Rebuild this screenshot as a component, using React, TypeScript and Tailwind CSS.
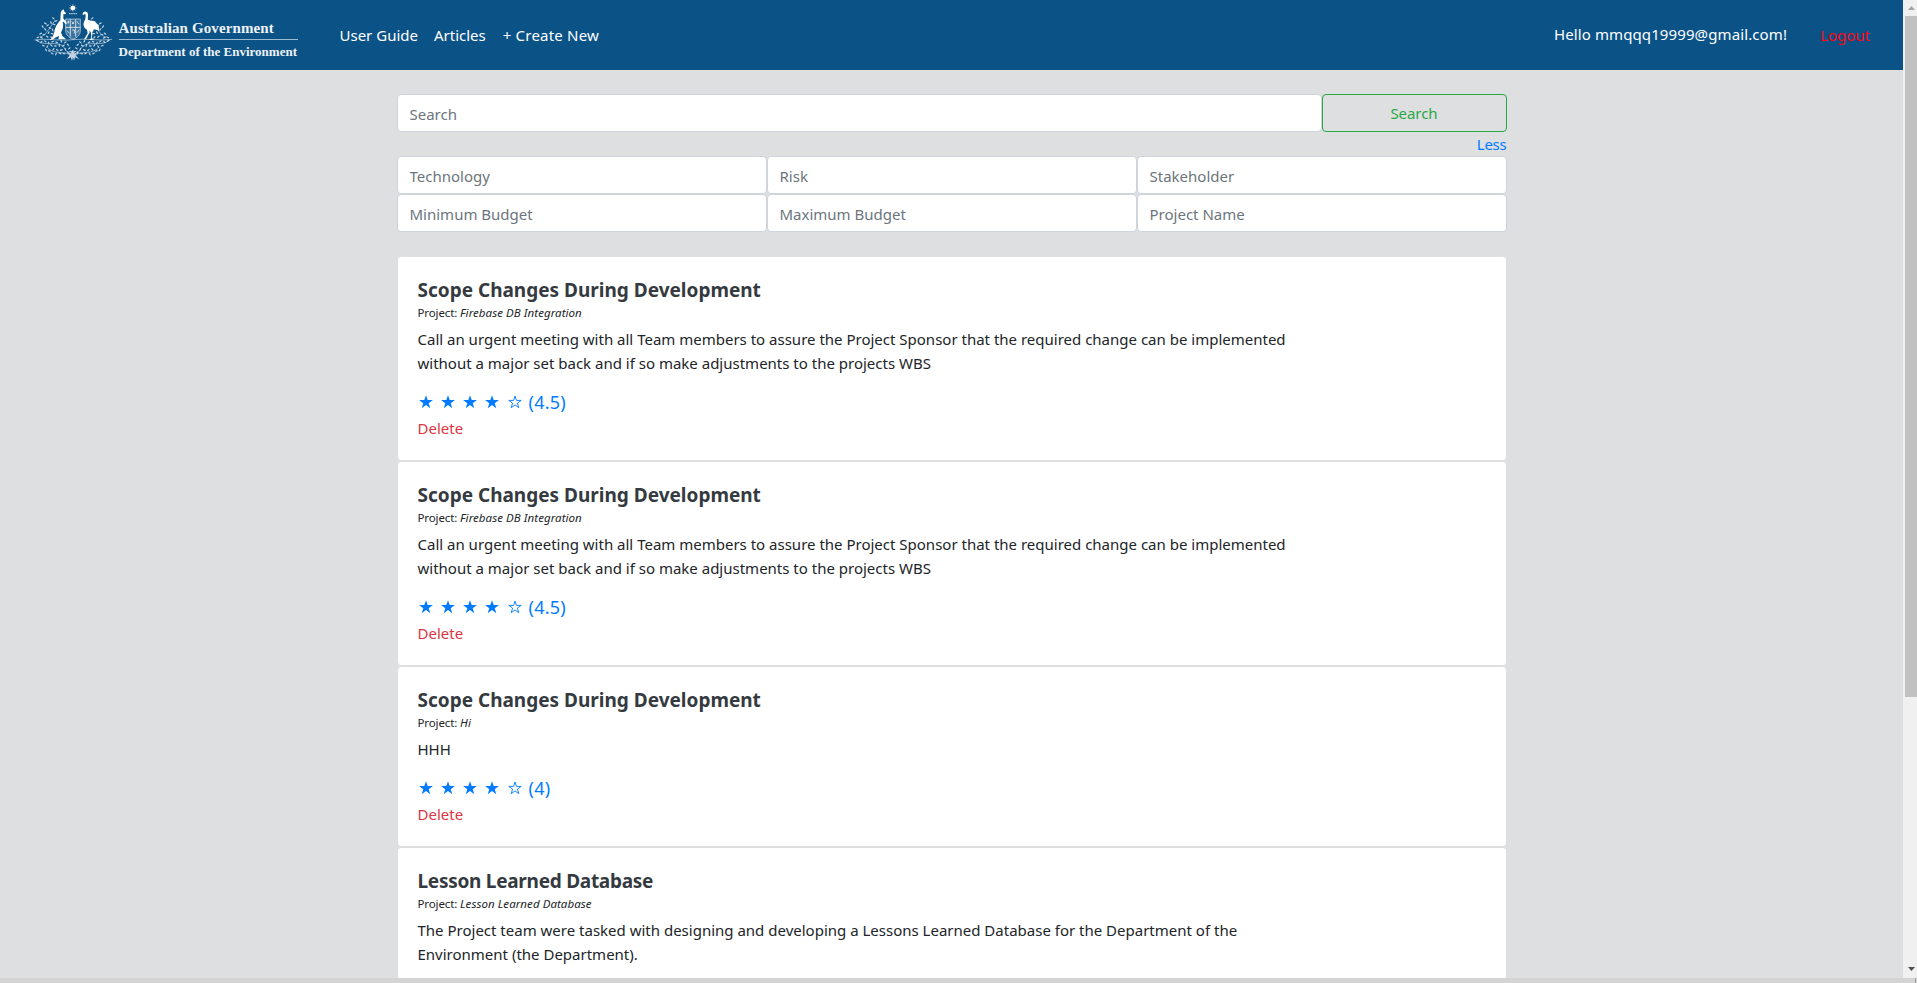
type Lesson = {
  title: string;
  titleTracking: string;
  project: string;
  lines: string[];
  rating?: string;
};

const lessons: Lesson[] = [
  {
    title: "Scope Changes During Development",
    titleTracking: "tracking-[0px]",
    project: "Firebase DB Integration",
    lines: [
      "Call an urgent meeting with all Team members to assure the Project Sponsor that the required change can be implemented",
      "without a major set back and if so make adjustments to the projects WBS",
    ],
    rating: "4.5",
  },
  {
    title: "Scope Changes During Development",
    titleTracking: "tracking-[0px]",
    project: "Firebase DB Integration",
    lines: [
      "Call an urgent meeting with all Team members to assure the Project Sponsor that the required change can be implemented",
      "without a major set back and if so make adjustments to the projects WBS",
    ],
    rating: "4.5",
  },
  {
    title: "Scope Changes During Development",
    titleTracking: "tracking-[0px]",
    project: "Hi",
    lines: ["HHH"],
    rating: "4",
  },
  {
    title: "Lesson Learned Database",
    titleTracking: "tracking-[-0.27px]",
    project: "Lesson Learned Database",
    lines: [
      "The Project team were tasked with designing and developing a Lessons Learned Database for the Department of the",
      "Environment (the Department).",
    ],
  },
];

// Leaf positions on the left half of the crest; the right half mirrors them.
const upperLeaves = [
  [70, 55, 40], [78, 63, -30], [63, 68, 80], [72, 73, 20], [53, 76, -40], [84, 80, 60], [46, 70, 30],
  [60, 84, 30], [68, 90, 75], [78, 91, -20], [46, 88, 50], [56, 98, -60], [66, 101, 10], [38, 80, 60],
  [32, 101, -30], [80, 98, 80], [42, 104, 0], [52, 110, 40], [24, 112, -20], [64, 112, 60], [34, 113, 30],
];
const lowerLeaves = [
  [22, 122, 20], [34, 126, -50], [46, 124, 40], [56, 129, 80], [68, 125, -20], [80, 127, 30],
  [94, 124, 70], [106, 127, -40], [40, 137, 20], [52, 140, -60], [64, 136, 50], [76, 138, 0],
  [88, 136, 80], [100, 137, -30], [114, 134, 40], [48, 150, 60], [58, 153, 10], [70, 148, -50],
  [82, 150, 40], [94, 150, -20], [106, 148, 70], [118, 145, -40], [66, 160, 20], [78, 162, -60],
  [90, 160, 30], [102, 161, 0], [114, 158, 80], [122, 155, 0],
];

function Leaves() {
  return (
    <g>
      {[...upperLeaves, ...lowerLeaves].map(([x, y, a], i) => (
        <ellipse key={i} cx={x} cy={y} rx="4.8" ry="2" transform={`rotate(${a} ${x} ${y})`} />
      ))}
    </g>
  );
}

function Crest() {
  return (
    <svg viewBox="0 0 270 195" className="h-[65px] w-[90px] shrink-0" fill="#fff">
      <g opacity="0.75">
        <Leaves />
        <g transform="translate(257 0) scale(-1 1)">
          <Leaves />
        </g>
        <path
          d="M13 120C60 114 90 124 128 119S205 124 246 118M20 122C50 142 88 118 104 145S124 160 128 150M237 122C207 142 169 118 153 145S133 160 129 150M54 146C84 166 104 150 120 166M203 146C173 166 153 150 137 166M30 112C50 104 58 84 76 60M227 112C209 104 200 84 190 62"
          fill="none"
          stroke="#fff"
          strokeWidth="2"
        />
        <path d="M110 178l9-12-4-10 8 5 3-9 4 0 3 9 8-5-4 10 11 12-13-6-3 10-3-10-3 10-4-10z" />
      </g>
      <path
        d="M107 57h44v34c0 14-9 22-22 27-13-5-22-13-22-27z"
        fill="#fff"
        fillOpacity="0.2"
        stroke="#fff"
        strokeOpacity="0.8"
        strokeWidth="2"
      />
      <path
        d="M121 58v52M137 58v52M107 82h44M112 66h6M115 62v9M126 65l6 7M132 65l-6 7M141 64l6 9M111 92l7 8M126 90h7v10M141 98l7-9"
        fill="none"
        stroke="#fff"
        strokeOpacity="0.85"
        strokeWidth="2.6"
      />
      <circle cx="128.500" cy="24" r="7" />
      <path d="M128.500 13v22M117.500 24h22M120.700 16.200l15.600 15.600M136.300 16.200l-15.600 15.600" stroke="#fff" strokeWidth="2" opacity="0.8" />
      <path d="M117 41h24" stroke="#fff" strokeWidth="3" strokeDasharray="5 1.500" opacity="0.8" />
      {/* Kangaroo */}
      <path d="M96 26l3 5 3-4 0 7 6 5c0 3-4 4-8 4l0 13 7 7 4 8-4 1-7-7-2 1c3 11 1 22-5 31l4 11 10 8v2H85l2-10-9 4c-5 5-12 8-20 8 9-5 12-13 15-25 2-14 10-26 18-34l1-18c0-7 2-11 6-14z" />
      {/* Emu */}
      <path d="M163 35c5-2 10 1 11 7 1 8-3 15 3 20 9-1 18 2 24 9 6 6 7 13 6 21l-8-3-8-1-4 9-1 17 6 5h-16l8-4-1-16-4-9-3 12-8 16h-6l2-3 9-15-2-11c-8-4-12-11-10-20 3-9 8-15 5-27l-8 3c-1-5 1-8 5-10z" />
    </svg>
  );
}

function Star({ filled }: { filled: boolean }) {
  return (
    <svg viewBox="0 0 14 14" className="h-3.5 w-3.5" fill={filled ? "#007bff" : "none"}>
      <path
        d={
          filled
            ? "M7 0.200L8.700 5.100H13.900L9.700 8.200L11.300 13.200L7 10.100L2.700 13.200L4.300 8.200L0.100 5.100H5.300Z"
            : "M7 1L8.400 5.400H13.200L9.400 8.100L10.800 12.700L7 9.900L3.200 12.700L4.600 8.100L0.800 5.400H5.600Z"
        }
        stroke={filled ? "none" : "#007bff"}
        strokeWidth="0.9"
      />
    </svg>
  );
}

function LessonCard({ lesson }: { lesson: Lesson }) {
  return (
    <article className="shrink-0 rounded border border-[#dfdfdf] bg-white p-5 text-[#212529]">
      <h5 className={`h-6 text-[19px] leading-[26px] font-bold text-[#343a40] ${lesson.titleTracking}`}>
        {lesson.title}
      </h5>
      <p className="mb-0.5 h-6 text-[11.500px] leading-[23px] whitespace-pre">
        <span className="tracking-[-0.12px]">Project: </span>
        <em className="tracking-[0.06px]">{lesson.project}</em>
      </p>
      <div className="mb-3.5 text-[15px] leading-6">
        {lesson.lines.map((line) => (
          <p key={line} className="whitespace-nowrap">{line}</p>
        ))}
      </div>
      {lesson.rating && (
        <>
          <div className="mb-0.5 flex h-[25px] items-center pl-[1.500px]">
            <div className="flex gap-[8.150px]">
              {[1, 2, 3, 4, 5].map((n) => (
                <Star key={n} filled={n <= 4} />
              ))}
            </div>
            <span className="ml-[7px] text-[18px] leading-6 tracking-[0.2px] text-[#007bff]">({lesson.rating})</span>
          </div>
          <a className="block h-6 text-[15px] leading-6 text-[#dc3545]">Delete</a>
        </>
      )}
    </article>
  );
}

function Field({ placeholder }: { placeholder: string }) {
  return (
    <input
      placeholder={placeholder}
      className="h-[38px] w-full min-w-0 rounded border border-[#ced4da] bg-white px-3 pt-px text-[15px] text-[#495057] outline-none placeholder:text-[#6c757d]"
    />
  );
}

export default function App() {
  return (
    <div className="flex h-[983px] w-[1917px] flex-col overflow-hidden bg-[#dedfe1] font-['Noto_Sans',sans-serif]">
      <div className="flex min-h-0 flex-1">
        <main className="flex w-[1903px] flex-col overflow-hidden">
          <nav className="flex h-[70px] shrink-0 items-center bg-[#0b5287] text-[15px] leading-6 text-white">
            <div className="flex h-full items-start pl-[30px]">
              <Crest />
              <div className="mt-[17px] -ml-[1.500px] w-[179px] font-['Liberation_Serif',serif] font-bold whitespace-nowrap text-[#eef3f7]">
                <p className="h-[23px] border-b border-[#9dbad0] text-[15px] leading-[22px] tracking-[0.12px]">
                  Australian Government
                </p>
                <p className="text-[13px] leading-[24px]">Department of the Environment</p>
              </div>
            </div>
            <div className="ml-[42px] flex gap-4">
              <a>User Guide</a>
              <a>Articles</a>
              <a className="pl-px tracking-[0.2px]">+ Create New</a>
            </div>
            <span className="mr-[33px] mb-0.5 ml-auto tracking-[0.11px]">Hello mmqqq19999@gmail.com!</span>
            <a className="mr-[33px] text-[#ff0515]">Logout</a>
          </nav>

          <div className="ml-[396.500px] w-[1110px] pt-6">
            <form className="mb-6">
              <div className="flex">
                <div className="w-[925px]">
                  <Field placeholder="Search" />
                </div>
                <button
                  type="button"
                  className="h-[38px] w-[185px] rounded border border-[#28a745] pt-px text-[15px] tracking-[-0.05px] text-[#28a745]"
                >
                  Search
                </button>
              </div>
              <div className="h-6 text-right text-[15px] leading-6 tracking-[-0.25px] text-[#007bff]">Less</div>
              <div className="grid grid-cols-3">
                <Field placeholder="Technology" />
                <Field placeholder="Risk" />
                <Field placeholder="Stakeholder" />
                <Field placeholder="Minimum Budget" />
                <Field placeholder="Maximum Budget" />
                <Field placeholder="Project Name" />
              </div>
            </form>
            <section className="flex flex-col">
              {lessons.map((lesson, i) => (
                <LessonCard key={i} lesson={lesson} />
              ))}
            </section>
          </div>
        </main>

        <aside className="flex w-3.5 flex-col items-end bg-[#f0f0f0]">
          <svg viewBox="0 0 12 16" className="h-4 w-3" fill="#a3a3a3">
            <path d="M3 10L6.500 6L10 10Z" />
          </svg>
          <div className="h-[681px] w-3 bg-[#c1c1c1]" />
          <svg viewBox="0 0 12 16" className="mt-auto h-4 w-3" fill="#505050">
            <path d="M3 5H10L6.500 9Z" />
          </svg>
        </aside>
      </div>
      <footer className="flex h-[5px] shrink-0 justify-end bg-[#d4d4d4] pr-px">
        <div className="w-px bg-[#a0a0a0]" />
      </footer>
    </div>
  );
}
